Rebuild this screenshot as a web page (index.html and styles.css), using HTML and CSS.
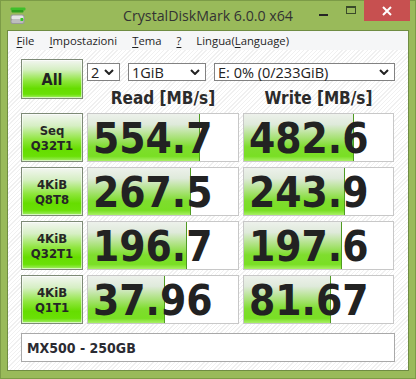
FILE: index.html
```html
<!DOCTYPE html>
<html lang="it">
<head>
    <meta charset="UTF-8">
    <meta name="viewport" content="width=device-width, initial-scale=1.0">
    <title>CrystalDiskMark 6.0.0 x64</title>
    <link rel="stylesheet" href="styles.css">
</head>
<body>
    <div class="window">
        <header class="titlebar">
            <div class="app-icon">
                <svg width="16" height="18" viewBox="0 0 16 18">
                    <rect x="0.5" y="0.5" width="15" height="3" rx="1" fill="#3fbf2a"/>
                    <rect x="1.5" y="3" width="12" height="2.5" rx="0.8" fill="#2f9f1f"/>
                    <rect x="0.5" y="7.5" width="14" height="9.5" rx="2" fill="#9a9a9a"/>
                    <rect x="1.5" y="8.5" width="12" height="4" rx="1.5" fill="#e4e4e4"/>
                    <rect x="1.5" y="12.5" width="12" height="3.5" rx="1.5" fill="#bdbdbd"/>
                    <rect x="10.5" y="11" width="2.5" height="3" fill="#33cc22"/>
                </svg>
            </div>
            <h1 class="title">CrystalDiskMark 6.0.0 x64</h1>
            <div class="controls">
                <span class="ctl"><i class="min-bar"></i></span>
                <span class="ctl"><i class="max-box"></i></span>
                <span class="ctl close">
                    <svg width="10" height="10" viewBox="0 0 10 10">
                        <path d="M1 1 L9 9 M9 1 L1 9" stroke="#fff" stroke-width="2"/>
                    </svg>
                </span>
            </div>
        </header>

        <div class="frame">
            <nav class="menu">
                <span><u>F</u>ile</span>
                <span><u>I</u>mpostazioni</span>
                <span><u>T</u>ema</span>
                <span><u>?</u></span>
                <span>Lingua(<u>L</u>anguage)</span>
            </nav>

            <main class="client">
                <div class="top">
                    <button class="test all">All</button>
                    <div class="setup">
                        <div class="selects">
                            <div class="combo count">2<svg class="chev" width="10" height="6" viewBox="0 0 10 6"><path d="M1 1 L5 5 L9 1" fill="none" stroke="#222" stroke-width="2"/></svg></div>
                            <div class="combo size">1GiB<svg class="chev" width="10" height="6" viewBox="0 0 10 6"><path d="M1 1 L5 5 L9 1" fill="none" stroke="#222" stroke-width="2"/></svg></div>
                            <div class="combo drive">E: 0% (0/233GiB)<svg class="chev" width="10" height="6" viewBox="0 0 10 6"><path d="M1 1 L5 5 L9 1" fill="none" stroke="#222" stroke-width="2"/></svg></div>
                        </div>
                        <div class="heads">
                            <span>Read [MB/s]</span>
                            <span>Write [MB/s]</span>
                        </div>
                    </div>
                </div>

                <div class="results">
                    <div class="row">
                        <button class="test">Seq<br>Q32T1</button>
                        <div class="value"><div class="bar" style="width: 74.9%"></div><span class="num">554.7</span></div>
                        <div class="value"><div class="bar" style="width: 73.7%"></div><span class="num">482.6</span></div>
                    </div>
                    <div class="row">
                        <button class="test">4KiB<br>Q8T8</button>
                        <div class="value"><div class="bar" style="width: 68.5%"></div><span class="num">267.5</span></div>
                        <div class="value"><div class="bar" style="width: 67.7%"></div><span class="num">243.9</span></div>
                    </div>
                    <div class="row">
                        <button class="test">4KiB<br>Q32T1</button>
                        <div class="value"><div class="bar" style="width: 65.9%"></div><span class="num">196.7</span></div>
                        <div class="value"><div class="bar" style="width: 65.9%"></div><span class="num">197.6</span></div>
                    </div>
                    <div class="row">
                        <button class="test">4KiB<br>Q1T1</button>
                        <div class="value"><div class="bar" style="width: 51.6%"></div><span class="num">37.96</span></div>
                        <div class="value"><div class="bar" style="width: 58.2%"></div><span class="num">81.67</span></div>
                    </div>
                </div>

                <div class="comment">MX500 - 250GB</div>
            </main>
        </div>
    </div>
</body>
</html>
```

FILE: styles.css
```css
body {
    margin: 0;
    background-color: #99ba5a; /* window frame green */
    font-family: "DejaVu Sans Condensed", "DejaVu Sans", sans-serif;
    color: #222;
}

.window {
    width: 416px;
    height: 379px;
    box-sizing: border-box;
    border: 1px solid #7c9b47;
    display: flex;
    flex-direction: column;
}

/* title bar */
.titlebar {
    height: 29px;
    display: grid;
    grid-template-columns: 1fr auto 1fr;
    align-items: start;
}

.app-icon {
    padding: 6px 0 0 9px;
}

.title {
    margin: 0;
    font-family: "Open Sans", sans-serif;
    font-weight: 400;
    font-size: 14.2px;
    line-height: 29px;
    color: #333;
}

.controls {
    justify-self: end;
    display: flex;
    margin-right: 5px;
}

.ctl {
    width: 27px;
    height: 20px;
    display: flex;
    align-items: center;
    justify-content: center;
}

.ctl.close {
    width: 46px;
    margin-top: -1px;
    height: 21px;
    background-color: #c75050;
}

.min-bar {
    width: 9px;
    height: 2px;
    margin-top: 7px;
    background-color: #262626;
}

.max-box {
    width: 8px;
    height: 5px;
    border: 1px solid #3a4a2a;
    border-top-width: 2px;
    margin-top: -2px;
}

/* client frame */
.frame {
    flex: 1;
    margin: 0 6px 7px 6px;
    border: 1px solid #6f8c43;
    display: flex;
    flex-direction: column;
}

.menu {
    height: 19px;
    display: flex;
    align-items: center;
    padding-left: 1px;
    background-color: #f5f6f7;
    font-family: "Open Sans", sans-serif;
    font-size: 11.3px;
    color: #1e1e1e;
}

.menu span {
    padding: 0 7.5px;
}

.menu u {
    text-underline-offset: 2px;
}

.client {
    flex: 1;
    padding: 9px 13px 0 13px;
    background: repeating-linear-gradient(135deg, #ffffff 0, #ffffff 2px, #f0f0f0 2px, #f0f0f0 3px);
}

/* top section */
.top {
    display: grid;
    grid-template-columns: 62px 1fr;
    column-gap: 4px;
    height: 54px;
}

.test {
    box-sizing: border-box;
    margin: 0;
    padding: 0;
    border: 1px solid #7d8a76;
    box-shadow: inset 0 0 0 1px rgba(255, 255, 255, 0.6);
    background: linear-gradient(to bottom, #f3f6f1 0%, #d6efc4 25%, #8ee63c 55%, #66dd00 75%, #6ae006 90%, #a4ee6a 100%);
    font-family: "DejaVu Sans Condensed", "DejaVu Sans", sans-serif;
    font-weight: bold;
    font-size: 13px;
    line-height: 15px;
    color: #262626;
    text-align: center;
}

.test.all {
    height: 40px;
    font-size: 16px;
    color: #222;
}

.selects {
    display: flex;
    margin-top: 4px;
}

.combo {
    box-sizing: border-box;
    height: 18px;
    display: flex;
    align-items: center;
    justify-content: space-between;
    padding: 0 5px 0 3px;
    border: 1px solid #828282;
    background-color: #fff;
    font-family: "Open Sans", sans-serif;
    font-size: 14.5px;
    color: #222;
}

.combo.count {
    width: 33px;
}

.combo.size {
    width: 78px;
    margin-left: 8px;
}

.combo.drive {
    width: 181px;
    margin-left: 8px;
}

.heads {
    display: grid;
    grid-template-columns: 152px 151px;
    column-gap: 4px;
    margin-top: 7px;
    font-weight: bold;
    font-size: 17px;
    line-height: 20px;
    color: #2b2b2b;
    text-align: center;
}

/* results */
.results {
    display: flex;
    flex-direction: column;
    gap: 5px;
}

.row {
    display: grid;
    grid-template-columns: 62px 152px 151px;
    column-gap: 4px;
    height: 49px;
}

.value {
    position: relative;
    box-sizing: border-box;
    border: 1px solid #c8c8c8;
    background-color: #fff;
    display: flex;
    align-items: center;
    padding: 2px 0 0 5px;
}

.bar {
    position: absolute;
    left: 0;
    top: 0;
    bottom: 0;
    box-sizing: border-box;
    border-right: 1px solid #4f9b22;
    background: linear-gradient(to bottom, #edf1eb 0%, #dfeadb 22%, #a9e278 50%, #7fdd2e 70%, #79df24 90%, #a8f064 100%);
}

.num {
    position: relative;
    font-weight: bold;
    font-size: 42px;
    line-height: 45px;
    color: #222;
}

.comment {
    box-sizing: border-box;
    height: 29px;
    margin-top: 9px;
    padding-left: 5px;
    display: flex;
    align-items: center;
    border: 1px solid #a9a9a9;
    background-color: #fff;
    font-weight: bold;
    font-size: 14px;
    color: #2b2b33;
}
```
